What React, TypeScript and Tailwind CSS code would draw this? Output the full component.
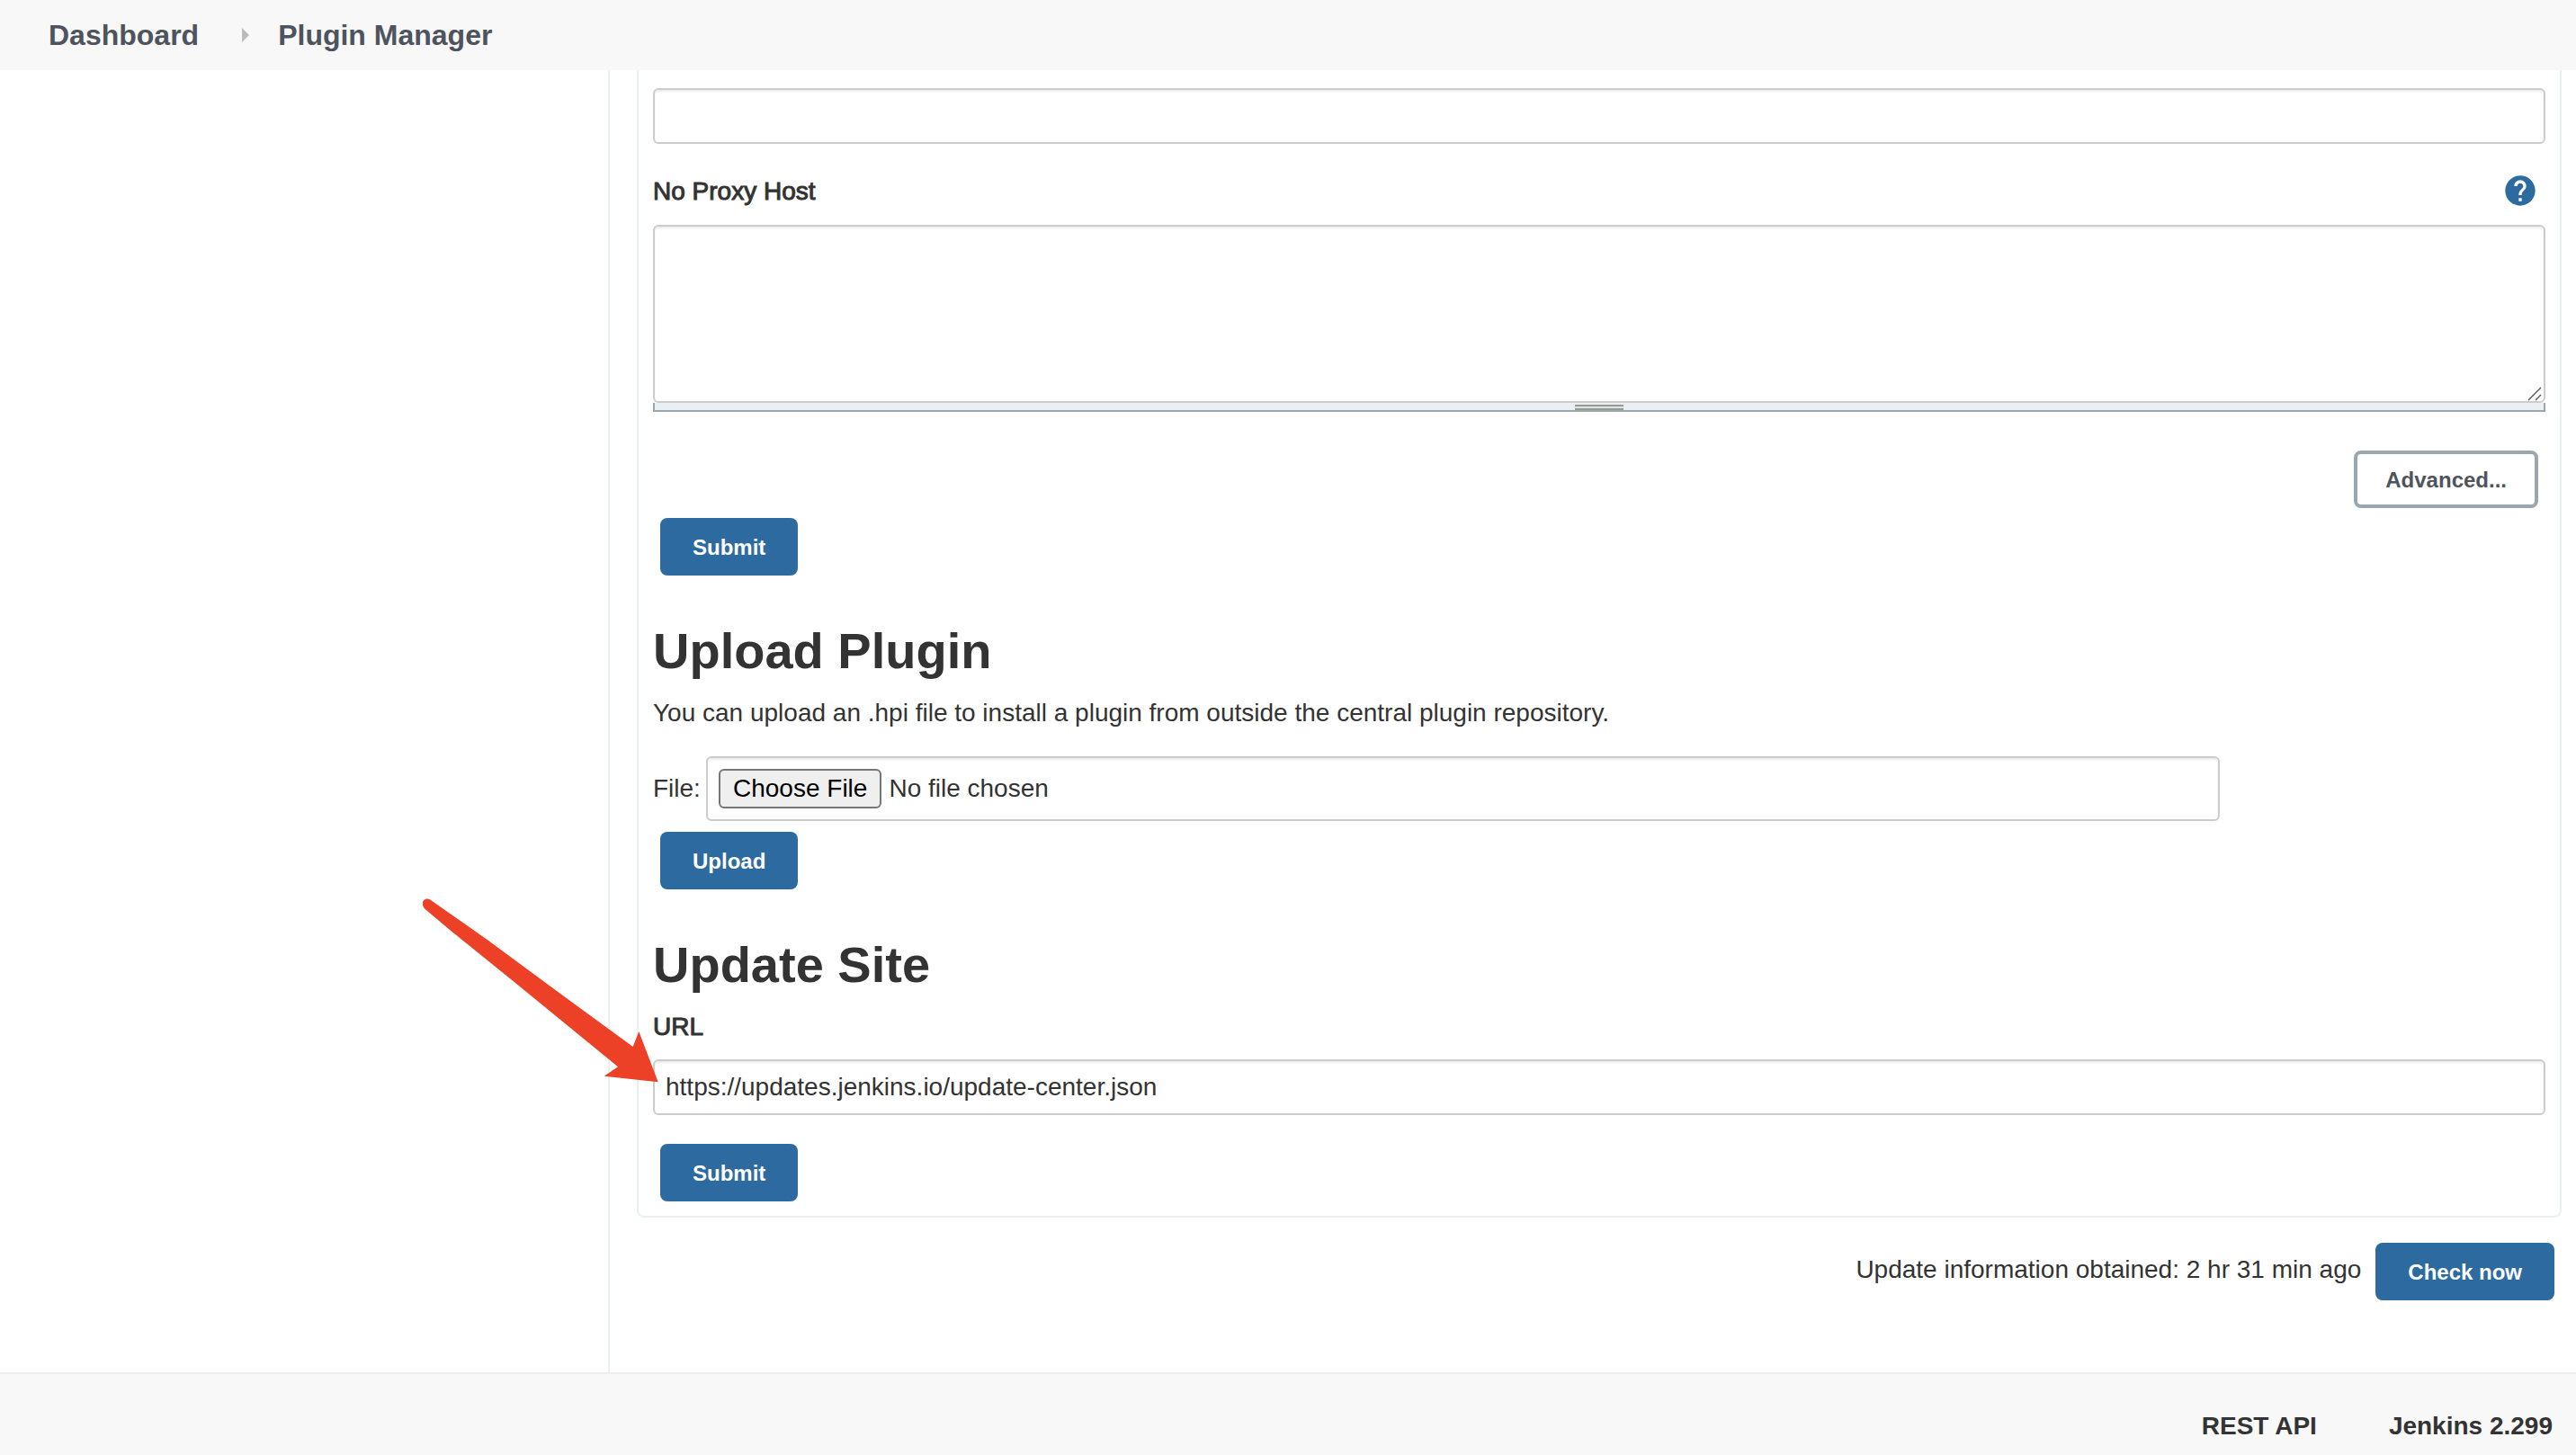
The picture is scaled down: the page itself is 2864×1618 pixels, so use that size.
import type { ReactNode } from "react";

const field =
  "block w-full rounded-md border-2 border-[#cccccc] bg-white shadow-[inset_0_2px_2px_rgba(0,0,0,0.075)] outline-none";

const mediumLabel = "font-medium [-webkit-text-stroke:1px_#333333]";

function PrimaryButton({ children }: { children: ReactNode }) {
  return (
    <button type="button" className="h-16 rounded-lg bg-[#2d6a9f] px-9 pt-0.5 text-2xl font-bold text-white">
      {children}
    </button>
  );
}

function Heading({ children }: { children: ReactNode }) {
  return <h1 className="text-[56px] leading-[64px] font-bold">{children}</h1>;
}

function HelpIcon() {
  return (
    <svg viewBox="0 0 24 24" className="size-10" fill="#2d6a9f" aria-hidden="true">
      <path d="M12 2C6.48 2 2 6.48 2 12s4.48 10 10 10 10-4.48 10-10S17.52 2 12 2zm1 17h-2v-2h2v2zm2.07-7.75l-.9.92C13.45 12.9 13 13.5 13 15h-2v-.5c0-1.1.45-2.1 1.17-2.83l1.24-1.26c.37-.36.59-.86.59-1.41 0-1.1-.9-2-2-2s-2 .9-2 2H8c0-2.21 1.79-4 4-4s4 1.79 4 4c0 .88-.36 1.68-.93 2.25z" />
    </svg>
  );
}

function PointerArrow() {
  return (
    <svg
      viewBox="0 0 264 206"
      className="pointer-events-none absolute -top-[180px] -left-[257px] h-[206px] w-[264px]"
      fill="#ec4127"
      aria-hidden="true"
    >
      <path d="M9.3 2.5L72.7 47L154 107L234.7 166L241.3 149L262.7 205.3L202.7 198.7L218 188.3L104.3 95.3L34.3 38.7L3.7 13C-2.5 7 2.5-1.5 9.3 2.5Z" />
    </svg>
  );
}

export default function App() {
  return (
    <div className="flex min-h-screen flex-col bg-white font-['Liberation_Sans',Arial,sans-serif] text-[28px] leading-10 text-[#333333]">
      <nav aria-label="Breadcrumb" className="flex h-[78px] items-center bg-[#f8f8f8] px-[54px] text-[32px] font-bold text-[#4d545d]">
        <a href="#dashboard">Dashboard</a>
        <svg viewBox="0 0 8 16" className="mr-8 ml-12 h-4 w-2" fill="#bbbbbb" aria-hidden="true">
          <path d="M0 0L8 8L0 16Z" />
        </svg>
        <a href="#plugins">Plugin Manager</a>
      </nav>

      <div className="flex">
        <aside className="w-[678px] shrink-0 border-r-2 border-[#eaeff2]" />
        <main className="min-w-0 flex-1 pr-4 pb-20 pl-[30px]">
          <div className="rounded-b-lg border-2 border-t-0 border-[#eaeff2] px-4 pt-5 pb-4">
            <form onSubmit={(e) => e.preventDefault()}>
              <input type="text" aria-label="Password" className={`${field} h-[62px] px-3`} />
              <div className="mt-8 flex h-10 items-center justify-between pr-2">
                <label htmlFor="no-proxy" className={`${mediumLabel} pt-0.5`}>
                  No Proxy Host
                </label>
                <button type="button" aria-label="Help for No Proxy Host">
                  <HelpIcon />
                </button>
              </div>
              <div className="relative mt-[18px]">
                <textarea id="no-proxy" className={`${field} h-[198px] resize-none px-3 py-2`} />
                <svg viewBox="0 0 16 16" className="absolute right-1 bottom-0.5 size-4" stroke="#555555" strokeWidth="1.4" aria-hidden="true">
                  <path d="M1 15L15 1M9 15L15 9" />
                </svg>
              </div>
              <div className="flex h-2.5 justify-center border-2 border-t-0 border-[#9ba7af] bg-[#eaeff2] pt-0.5">
                <div className="h-1.5 w-[54px] border-y-2 border-[#949c94] bg-[#dfe3e4]" />
              </div>
              <div className="mt-[43px] flex justify-end pr-2">
                <button type="button" className="h-16 rounded-lg border-4 border-[#9ba7af] bg-white px-[31px] pt-0.5 text-2xl font-bold text-[#4d545d]">
                  Advanced...
                </button>
              </div>
              <div className="mt-[11px] pl-2">
                <PrimaryButton>Submit</PrimaryButton>
              </div>
            </form>

            <section className="mt-[52px]">
              <Heading>Upload Plugin</Heading>
              <p className="mt-[17px]">You can upload an .hpi file to install a plugin from outside the central plugin repository.</p>
              <div className="mt-7 flex items-center">
                <label htmlFor="plugin-file" className="w-[59px]">
                  File:
                </label>
                <input
                  id="plugin-file"
                  type="file"
                  className={`${field} h-[72px] max-w-[80%] px-3 py-3 file:mr-2 file:h-11 file:rounded-md file:border-2 file:border-solid file:border-[#767676] file:bg-[#efefef] file:px-3.5 file:text-black`}
                />
              </div>
              <div className="mt-3 pl-2">
                <PrimaryButton>Upload</PrimaryButton>
              </div>
            </section>

            <section className="mt-[52px]">
              <Heading>Update Site</Heading>
              <label htmlFor="site-url" className={`${mediumLabel} mt-[17px] block`}>
                URL
              </label>
              <div className="relative mt-4">
                <input id="site-url" type="text" defaultValue="https://updates.jenkins.io/update-center.json" className={`${field} h-[62px] px-3`} />
                <PointerArrow />
              </div>
              <div className="mt-8 pl-2">
                <PrimaryButton>Submit</PrimaryButton>
              </div>
            </section>
          </div>
          <div className="mt-7 flex items-center justify-end gap-4 pr-2">
            <span className="pb-1">Update information obtained: 2 hr 31 min ago</span>
            <PrimaryButton>Check now</PrimaryButton>
          </div>
        </main>
      </div>

      <footer className="flex flex-1 justify-end gap-20 border-t-2 border-[#eaeff2] bg-[#f8f8f8] px-[26px] pt-[38px] font-bold">
        <a href="#api">REST API</a>
        <a href="#jenkins">Jenkins 2.299</a>
      </footer>
    </div>
  );
}
